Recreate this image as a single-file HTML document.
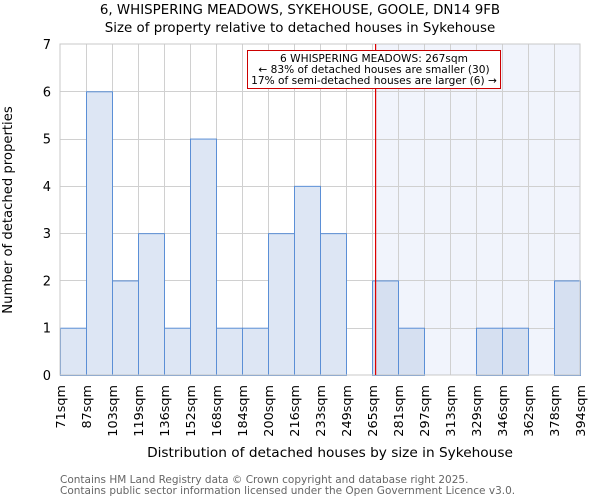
<!DOCTYPE html>
<html><head><style>body{margin:0;background:#fff}svg{display:block}text{font-family:"DejaVu Sans","Liberation Sans",sans-serif}</style></head><body>
<svg width="600" height="500" xmlns="http://www.w3.org/2000/svg">
<rect x="375" y="44" width="205" height="331" fill="#f1f4fc"/>
<g id="grid" stroke="#d0d0d0" stroke-width="1"></g>
<g id="bars"></g>
<rect x="60" y="44" width="520" height="331" fill="none" stroke="#c8c8c8"/>
<rect x="375" y="44" width="1.2" height="331" fill="#dd0000"/>
<rect x="247.5" y="50.5" width="253" height="38" fill="#fff" stroke="#cc0000"/>
<text x="374" y="62" font-size="10.6" text-anchor="middle">6 WHISPERING MEADOWS: 267sqm</text>
<text x="374" y="73" font-size="10.6" text-anchor="middle">← 83% of detached houses are smaller (30)</text>
<text x="374" y="84" font-size="10.6" text-anchor="middle">17% of semi-detached houses are larger (6) →</text>
<text x="300" y="14" font-size="13.4" text-anchor="middle">6, WHISPERING MEADOWS, SYKEHOUSE, GOOLE, DN14 9FB</text>
<text x="300" y="32" font-size="13.4" text-anchor="middle">Size of property relative to detached houses in Sykehouse</text>
<text x="330" y="457" font-size="13.7" text-anchor="middle">Distribution of detached houses by size in Sykehouse</text>
<text transform="translate(12,210) rotate(-90)" font-size="13.2" text-anchor="middle">Number of detached properties</text>
<text x="60" y="483" font-size="10.5" fill="#666">Contains HM Land Registry data © Crown copyright and database right 2025.</text>
<text x="60" y="494" font-size="10.5" fill="#666">Contains public sector information licensed under the Open Government Licence v3.0.</text>
<g id="yl" font-size="13" text-anchor="end"></g>
<g id="xl" font-size="12.8" text-anchor="end"></g>
</svg>
<script>
var ns="http://www.w3.org/2000/svg",u=331/7;
function el(p,t,a,tx){var e=document.createElementNS(ns,t);for(var k in a)e.setAttribute(k,a[k]);if(tx!=null)e.textContent=tx;document.getElementById(p).appendChild(e);}
for(var i=1;i<7;i++){var y=Math.round(375-i*u)+.5;el("grid","line",{x1:60,x2:580,y1:y,y2:y});}
for(var i=1;i<20;i++){var x=60+i*26+.5;el("grid","line",{x1:x,x2:x,y1:44,y2:375});}
var v=[1,6,2,3,1,5,1,1,3,4,3,0,2,1,0,0,1,1,0,2];
v.forEach(function(h,i){if(!h)return;var y=375-h*u;el("bars","rect",{x:60+i*26+.5,y:y+.5,width:26,height:375-y,fill:i>=12?"#d6e0f1":"#dde6f4",stroke:"#5b8fd6","stroke-width":1});});
for(var i=0;i<=7;i++)el("yl","text",{x:51,y:375-i*u+5},i);
var L=["71sqm","87sqm","103sqm","119sqm","136sqm","152sqm","168sqm","184sqm","200sqm","216sqm","233sqm","249sqm","265sqm","281sqm","297sqm","313sqm","329sqm","346sqm","362sqm","378sqm","394sqm"];
L.forEach(function(t,i){var x=60+i*26+5;el("xl","text",{transform:"translate("+x+",385) rotate(-90)"},t);});
</script>
</body></html>
